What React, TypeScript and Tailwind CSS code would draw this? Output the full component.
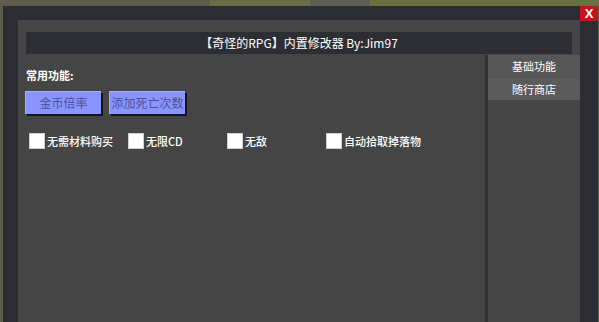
const font = { fontFamily: '"Noto Sans CJK SC", "Noto Sans", sans-serif' };

const checks = ['无需材料购买', '无限CD', '无敌', '自动拾取掉落物'];

export default function App() {
  return (
    <div className="w-[599px] h-[322px] overflow-hidden bg-[#5d5c4b] flex flex-col" style={font}>
      <div className="h-[6px] shrink-0 flex">
        <div className="w-[210px] bg-[#5e5d4c]" />
        <div className="w-[100px] bg-[#6a6d45]" />
        <div className="w-[60px] bg-[#5f5e55]" />
        <div className="flex-1 bg-[#6c7040]" />
      </div>
      <div className="flex-1 ml-[3px] mr-[1px] bg-[#2c2d32] flex relative">
        <div className="absolute right-0 top-0 w-[18px] h-[15px] bg-[#c4151c] text-white font-bold text-[13px] leading-[15px] text-center" style={{ fontFamily: '"Liberation Sans", sans-serif' }}>
          X
        </div>
        <div className="mt-[14px] ml-[15px] mr-[18px] flex-1 bg-[#454545] flex flex-col">
          <div className="mt-[12px] mx-[8px] h-[22px] bg-[#2d2e33] text-white text-[12px] leading-[22px] text-center">
            【奇怪的RPG】内置修改器 By:Jim97
          </div>
          <div className="flex flex-1 mt-[1px]">
            <div className="flex-1 pl-[8px] pt-[12px] flex flex-col">
              <div className="text-white text-[11px] font-bold leading-[16px]">常用功能:</div>
              <div className="flex gap-[8px] mt-[8px] ml-[-1px]">
                {['金币倍率', '添加死亡次数'].map((b) => (
                  <div
                    key={b}
                    className="w-[76px] h-[23px] bg-[#8a94ff] border-t border-l border-[#a6adff] shadow-[2px_2px_0_#141414] text-[#4d5199] text-[12px] leading-[22px] text-center"
                  >
                    {b}
                  </div>
                ))}
              </div>
              <div className="flex mt-[19px] ml-[3px]">
                {checks.map((c) => (
                  <div key={c} className="w-[99px] flex items-center gap-[2px]">
                    <div className="w-[16px] h-[16px] bg-white shrink-0 border border-[#cfcfcf]" />
                    <span className="text-white text-[11px] font-medium leading-[16px] whitespace-nowrap">{c}</span>
                  </div>
                ))}
              </div>
            </div>
            <div className="w-[3px] bg-[#323232]" />
            <div className="w-[92px] flex flex-col">
              <div className="h-[22px] bg-[#575757] text-white text-[11px] leading-[22px] text-center">基础功能</div>
              <div className="h-[23px] bg-[#5b5b5b] border-t border-[#525252] text-white text-[11px] leading-[22px] text-center">随行商店</div>
            </div>
          </div>
        </div>
      </div>
    </div>
  );
}
